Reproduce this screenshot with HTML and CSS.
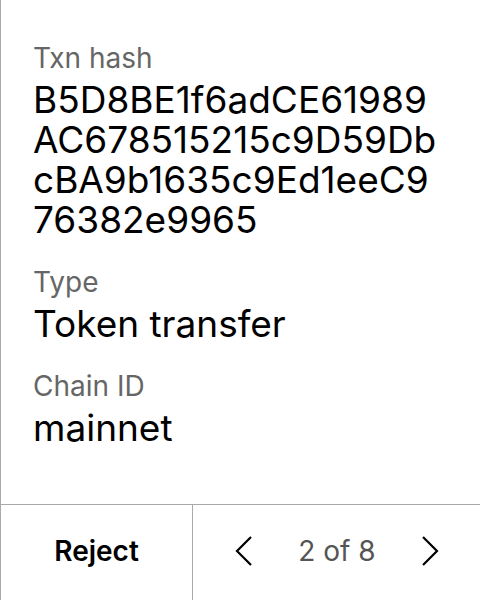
FILE: index.html
```html
<!DOCTYPE html>
<html>
<head>
<meta charset="utf-8">
<link rel="stylesheet" href="styles.css">
</head>
<body>
<div class="screen">
  <div class="content">
    <div class="field">
      <div class="label">Txn hash</div>
      <div class="value">B5D8BE1f6adCE61989<br>AC678515215c9D59Db<br>cBA9b1635c9Ed1eeC9<br>76382e9965</div>
    </div>
    <div class="field">
      <div class="label">Type</div>
      <div class="value">Token transfer</div>
    </div>
    <div class="field">
      <div class="label">Chain ID</div>
      <div class="value">mainnet</div>
    </div>
  </div>
  <div class="actions">
    <div class="reject">Reject</div>
    <div class="pager">
      <svg class="chev" width="17" height="30" viewBox="0 0 17 30"><path d="M16 1 L2 15 L16 29" fill="none" stroke="#000" stroke-width="2.2"/></svg>
      <span class="count">2 of 8</span>
      <svg class="chev" width="17" height="30" viewBox="0 0 17 30"><path d="M1 1 L15 15 L1 29" fill="none" stroke="#000" stroke-width="2.2"/></svg>
    </div>
  </div>
</div>
</body>
</html>
```
FILE: styles.css
```css
html, body {
  margin: 0;
  padding: 0;
  background: #fff;
}
.screen {
  width: 480px;
  height: 600px;
  box-sizing: border-box;
  border-left: 1px solid #aaa;
  display: flex;
  flex-direction: column;
  font-family: Inter, "Noto Sans", sans-serif;
  color: #000;
}
.content {
  flex: 1;
  padding: 36px 0 0 32px;
  display: flex;
  flex-direction: column;
  gap: 20px;
}
.label {
  font-size: 28px;
  line-height: 44px;
  color: #666;
}
.value {
  font-size: 37px;
  line-height: 40px;
}
.actions {
  height: 96px;
  box-sizing: border-box;
  border-top: 1px solid #aaa;
  display: flex;
}
.reject {
  width: 191px;
  box-sizing: content-box;
  border-right: 1px solid #aaa;
  padding-bottom: 3px;
  display: flex;
  align-items: center;
  justify-content: center;
  font-size: 28px;
  font-weight: 600;
}
.pager {
  flex: 1;
  display: flex;
  align-items: center;
  justify-content: space-between;
  padding: 0 41px 3px 42px;
}
.count {
  font-size: 28px;
  color: #555;
}
```
